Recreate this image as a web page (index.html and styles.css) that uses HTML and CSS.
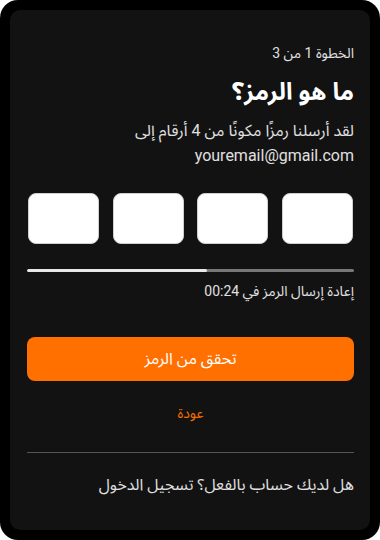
FILE: index.html
```html
<!DOCTYPE html>
<html lang="ar" dir="rtl">
<head>
<meta charset="utf-8">
<link rel="stylesheet" href="styles.css">
</head>
<body>
<div class="frame">
  <main class="card">
    <p class="step">الخطوة 1 من 3</p>
    <h1 class="title">ما هو الرمز؟</h1>
    <p class="desc">لقد أرسلنا رمزًا مكونًا من 4 أرقام إلى<br><span dir="ltr">youremail@gmail.com</span></p>
    <div class="code" dir="ltr">
      <input class="digit" type="text" maxlength="1">
      <input class="digit" type="text" maxlength="1">
      <input class="digit" type="text" maxlength="1">
      <input class="digit" type="text" maxlength="1">
    </div>
    <div class="progress" dir="ltr"><div class="progress-fill" style="width:55%"></div></div>
    <p class="resend">إعادة إرسال الرمز في 00:24</p>
    <button class="verify">تحقق من الرمز</button>
    <a class="back" href="#">عودة</a>
    <hr class="divider">
    <p class="login">هل لديك حساب بالفعل؟ تسجيل الدخول</p>
  </main>
</div>
</body>
</html>
```
FILE: styles.css
```css
html, body {
  margin: 0;
  padding: 0;
  background: #ffffff;
}
body {
  font-family: Roboto, "Noto Sans Arabic", "Noto Naskh Arabic", "Noto Sans Arabic UI", "Noto Kufi Arabic", sans-serif;
  width: 380px;
  height: 540px;
}
.frame {
  box-sizing: border-box;
  width: 380px;
  height: 540px;
  background: #000;
  border-radius: 18px;
  padding: 10px;
}
.card {
  box-sizing: border-box;
  height: 520px;
  background: #121212;
  border-radius: 10px;
  padding: 34px 16px 0 17px;
  display: flex;
  flex-direction: column;
  color: #e6e6e6;
}
.step {
  margin: 0;
  font-size: 14px;
  line-height: 18px;
  color: #e0e0e0;
}
.title {
  margin: 15px 0 0;
  font-size: 24px;
  line-height: 30px;
  font-weight: 700;
  color: #ffffff;
}
.desc {
  margin: 11px 0 0;
  font-size: 16px;
  line-height: 25px;
  color: #e0e0e0;
}
.code {
  margin-top: 25px;
  display: flex;
  justify-content: space-between;
  padding: 0 1px;
}
.digit {
  box-sizing: border-box;
  width: 71px;
  height: 51px;
  border: 1px solid #cfcfcf;
  border-radius: 8px;
  background: #ffffff;
  margin: 0;
  padding: 0;
  outline: none;
}
.progress {
  margin-top: 25px;
  height: 3px;
  border-radius: 2px;
  background: #777777;
  overflow: hidden;
}
.progress-fill {
  height: 100%;
  background: #e8e8e8;
  border-radius: 2px;
}
.resend {
  margin: 10px 0 0;
  font-size: 14px;
  line-height: 18px;
  color: #e0e0e0;
}
.verify {
  margin-top: 37px;
  height: 44px;
  border: none;
  border-radius: 8px;
  background: #ff7000;
  color: #ffffff;
  font-family: inherit;
  font-size: 16px;
  cursor: pointer;
}
.back {
  align-self: center;
  margin-top: 23px;
  font-size: 14px;
  line-height: 18px;
  color: #f07000;
  text-decoration: none;
}
.divider {
  margin: 30px 0 0;
  border: none;
  border-top: 1px solid #555555;
  height: 0;
}
.login {
  margin: 21px 0 0;
  font-size: 16px;
  line-height: 22px;
  color: #e0e0e0;
}
```
